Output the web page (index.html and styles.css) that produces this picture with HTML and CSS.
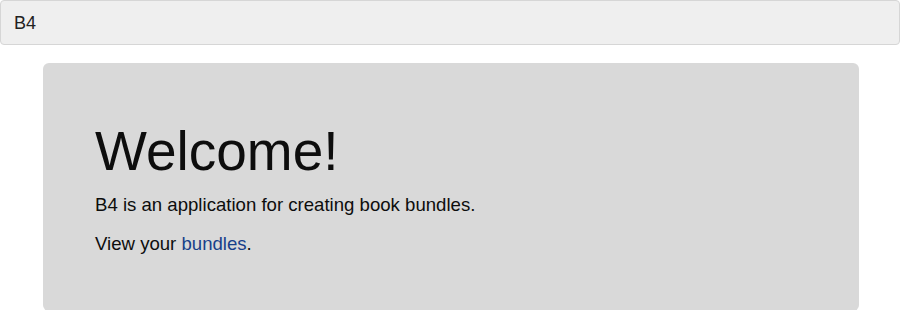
FILE: index.html
```html
<!DOCTYPE html>
<html lang="en">

<head>
    <meta charset="UTF-8">
    <meta name="viewport" content="width=device-width, initial-scale=1.0">
    <title>B4</title>
    <link rel="stylesheet" href="styles.css">
</head>

<body>
    <div class="navbar">
        <a class="brand" href="#">B4</a>
    </div>
    <div class="jumbotron">
        <h1>Welcome!</h1>
        <p>B4 is an application for creating book bundles.</p>
        <p>View your <a href="#">bundles</a>.</p>
    </div>
</body>

</html>
```
FILE: styles.css
```css
html,
body {
    margin: 0;
    padding: 0;
}

body {
    font-family: "Liberation Sans", Arial, sans-serif;
    color: #0d0d0d;
    background: #fff;
}

a {
    color: #17408a;
    text-decoration: none;
}

.navbar {
    height: 43px;
    display: flex;
    align-items: center;
    padding-left: 13px;
    background: #efefef;
    border: 1px solid #d6d6d6;
    border-radius: 4px;
}

.brand {
    font-size: 18px;
    line-height: 20px;
    color: #222;
}

.jumbotron {
    margin: 18px 41px 0 43px;
    padding: 59px 52px 41px;
    background: #d9d9d9;
    border-radius: 6px;
}

.jumbotron h1 {
    margin: 0 0 11px;
    font-size: 55px;
    font-weight: normal;
    line-height: 1.08;
}

.jumbotron p {
    margin: 0 0 13px;
    font-size: 18.6px;
    line-height: 26px;
}
```
